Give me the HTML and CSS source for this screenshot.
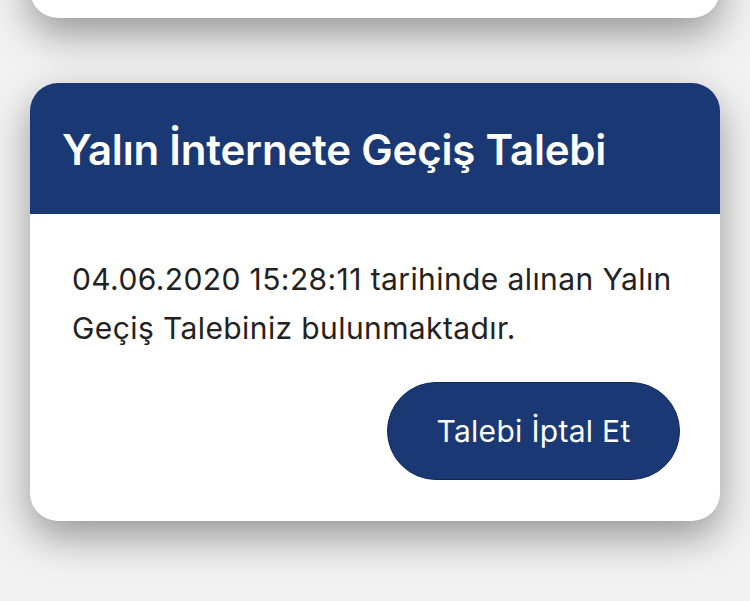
FILE: index.html
```html
<!DOCTYPE html>
<html lang="tr">
<head>
<meta charset="utf-8">
<link rel="stylesheet" href="styles.css">
</head>
<body>
<div class="page">
  <div class="card card-prev"></div>
  <div class="card">
    <div class="card-header">
      <h1 class="card-title">Yalın İnternete Geçiş Talebi</h1>
    </div>
    <div class="card-body">
      <p class="card-text">04.06.2020 15:28:11 tarihinde alınan Yalın Geçiş Talebiniz bulunmaktadır.</p>
      <div class="actions">
        <button class="btn">Talebi İptal Et</button>
      </div>
    </div>
  </div>
</div>
</body>
</html>
```

FILE: styles.css
```css
html, body {
  margin: 0;
  padding: 0;
  background: #f2f2f2;
  width: 750px;
  height: 601px;
  overflow: hidden;
  font-family: Inter, "Noto Sans", sans-serif;
}
.page {
  padding: 0 30px;
  display: flex;
  flex-direction: column;
  gap: 65px;
  margin-top: -100px;
}
.card {
  background: #fff;
  border-radius: 28px;
  overflow: hidden;
  box-shadow: 0 16px 40px rgba(0, 0, 0, 0.38);
}
.card-prev {
  height: 118px;
}
.card-header {
  background: #1a3874;
  height: 131px;
  display: flex;
  align-items: center;
  padding: 0 32px;
}
.card-title {
  margin: 0;
  color: #fff;
  font-size: 42px;
  font-weight: 600;
  letter-spacing: -0.2px;
  padding-top: 2px;
}
.card-body {
  padding: 41px 40px 41px 42px;
}
.card-text {
  margin: 0;
  font-size: 30px;
  letter-spacing: 0.4px;
  line-height: 49px;
  color: #222;
}
.actions {
  display: flex;
  justify-content: flex-end;
  margin-top: 29px;
}
.btn {
  width: 293px;
  height: 98px;
  border-radius: 49px;
  background: #1a3874;
  border: 1px solid #10285a;
  color: #fff;
  font-family: Inter, "Noto Sans", sans-serif;
  font-size: 30px;
  letter-spacing: 0.3px;
  font-weight: 400;
  padding: 0;
}
```
